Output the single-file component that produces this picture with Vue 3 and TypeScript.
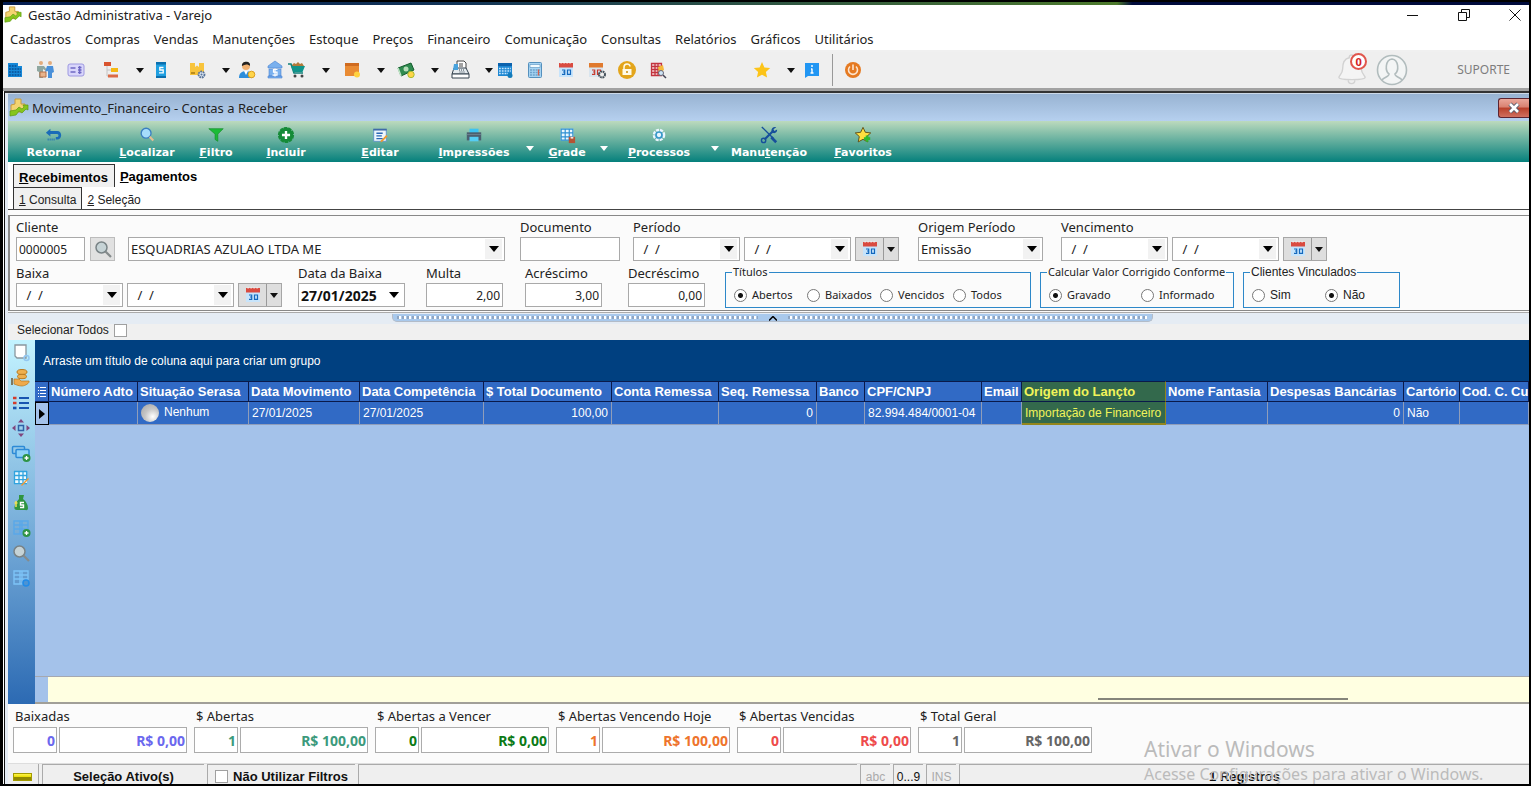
<script setup lang="ts">
import { ref } from 'vue'

interface Tool { icon: string; label: string; split?: boolean }
interface Action { icon: string; before: string; key: string; after: string; split?: boolean }
interface Column { title: string; value: string; width: number; right?: boolean; ball?: boolean; marked?: boolean }
interface Total { label: string; count: string; amount: string; tone: string }

const menus: string[] = ['Cadastros', 'Compras', 'Vendas', 'Manutenções', 'Estoque', 'Preços', 'Financeiro', 'Comunicação', 'Consultas', 'Relatórios', 'Gráficos', 'Utilitários']

const tools: Tool[] = [
  { icon: 'building', label: 'Empresa' },
  { icon: 'people', label: 'Clientes' },
  { icon: 'card', label: 'Cadastro' },
  { icon: 'tree', label: 'Plano', split: true },
  { icon: 'book', label: 'Preços' },
  { icon: 'box', label: 'Produtos', split: true },
  { icon: 'seller', label: 'Vendedor' },
  { icon: 'bank', label: 'Banco' },
  { icon: 'cart', label: 'Vendas', split: true },
  { icon: 'parcel', label: 'Estoque', split: true },
  { icon: 'money', label: 'Financeiro', split: true },
  { icon: 'register', label: 'Caixa', split: true },
  { icon: 'agenda', label: 'Agenda' },
  { icon: 'calc', label: 'Calculadora' },
  { icon: 'cal', label: 'Calendário' },
  { icon: 'calgear', label: 'Configurar calendário' },
  { icon: 'lock', label: 'Bloquear' },
  { icon: 'gridfind', label: 'Consulta' },
  { icon: 'star', label: 'Favoritos', split: true },
  { icon: 'info', label: 'Informações' }
]

const actions: Action[] = [
  { icon: 'back', before: '', key: '', after: 'Retornar' },
  { icon: 'find', before: '', key: 'L', after: 'ocalizar' },
  { icon: 'funnel', before: '', key: 'F', after: 'iltro' },
  { icon: 'plus', before: '', key: 'I', after: 'ncluir' },
  { icon: 'edit', before: '', key: 'E', after: 'ditar' },
  { icon: 'printer', before: '', key: 'I', after: 'mpressões', split: true },
  { icon: 'gridsave', before: '', key: 'G', after: 'rade', split: true },
  { icon: 'gear', before: '', key: 'P', after: 'rocessos', split: true },
  { icon: 'wrench', before: 'Manu', key: 't', after: 'enção' },
  { icon: 'staradd', before: '', key: 'F', after: 'avoritos' }
]

const sideIcons: string[] = ['page', 'hand', 'list', 'move', 'cardsadd', 'gridedit', 'bag', 'tableadd', 'lens', 'tablesync']

const columns: Column[] = [
  { title: 'Número Adto', value: '', width: 89 },
  { title: 'Situação Serasa', value: 'Nenhum', width: 111, ball: true },
  { title: 'Data Movimento', value: '27/01/2025', width: 111 },
  { title: 'Data Competência', value: '27/01/2025', width: 124 },
  { title: '$ Total Documento', value: '100,00', width: 128, right: true },
  { title: 'Conta Remessa', value: '', width: 107 },
  { title: 'Seq. Remessa', value: '0', width: 98, right: true },
  { title: 'Banco', value: '', width: 48 },
  { title: 'CPF/CNPJ', value: '82.994.484/0001-04', width: 117 },
  { title: 'Email', value: '', width: 40 },
  { title: 'Origem do Lançto', value: 'Importação de Financeiro', width: 144, marked: true },
  { title: 'Nome Fantasia', value: '', width: 102 },
  { title: 'Despesas Bancárias', value: '0', width: 136, right: true },
  { title: 'Cartório', value: 'Não', width: 56 },
  { title: 'Cod. C. Cu', value: '', width: 69 }
]

const totals: Total[] = [
  { label: 'Baixadas', count: '0', amount: 'R$ 0,00', tone: 'violet' },
  { label: '$ Abertas', count: '1', amount: 'R$ 100,00', tone: 'teal' },
  { label: '$ Abertas a Vencer', count: '0', amount: 'R$ 0,00', tone: 'green' },
  { label: '$ Abertas Vencendo Hoje', count: '1', amount: 'R$ 100,00', tone: 'orange' },
  { label: '$ Abertas Vencidas', count: '0', amount: 'R$ 0,00', tone: 'red' },
  { label: '$ Total Geral', count: '1', amount: 'R$ 100,00', tone: 'gray' }
]

const titulos = ref('Abertos')
const conforme = ref('Gravado')
const vinculados = ref('Não')
</script>

<template>
  <div class="screen">
    <svg class="defs" aria-hidden="true">
      <symbol id="logo" viewBox="0 0 20 20"><path d="M6 1h6v5h4v5l-4 3H2V7l4-1z" fill="#f3d471" stroke="#c79a3c" /><path d="M1 13l6-1 3-3 3 2 2-2-1-2h5v5l-2-1-4 4-3-2-3 4-6 1z" fill="#86c51d" stroke="#5c9a12" stroke-width=".7" /></symbol>
      <symbol id="building" viewBox="0 0 20 20"><path d="M3 3h10v3h4v11H3z" fill="#1688d8" /><path d="M4 6h8M4 9h12M4 12h12M4 15h12" stroke="#0a4f94" stroke-width="1.300" stroke-dasharray="1.800 1" /></symbol>
      <symbol id="people" viewBox="0 0 20 20"><circle cx="6" cy="3" r="2" fill="#e2ac7c" /><circle cx="15" cy="3" r="2" fill="#e2ac7c" /><path d="M2 6h7l3 4-1 1-3-2v9H4v-6l-2-1z" fill="#8fa7a0" /><path d="M12 6h6l1 6-2 1v5h-4v-7l-3 1z" fill="#4a90d9" /><path d="M5 12h6v5H5z" fill="#e8b48c" stroke="#b8714a" /></symbol>
      <symbol id="card" viewBox="0 0 20 20"><rect x="2" y="4" width="16" height="12" rx="2" fill="#d9d6fb" stroke="#9d98e0" /><path d="M4.500 8h5M4.500 12h5M12 7.500h3.500M12 10h3.500M12 12.500h3.500M13.700 6v8" stroke="#6f68c4" stroke-width="1.300" /></symbol>
      <symbol id="tree" viewBox="0 0 20 20"><path d="M6 6v10h5M6 10h5" stroke="#c4c4c4" fill="none" /><rect x="3" y="2" width="7" height="4" fill="#d9542f" /><rect x="10" y="8" width="7" height="4" fill="#f5b914" /><rect x="7" y="14.500" width="10" height="3" fill="#dc6a45" /></symbol>
      <symbol id="book" viewBox="0 0 20 20"><path d="M5 2h10v16H5z" fill="#1f9fe0" /><path d="M5 2h10v2.500H5zM5 16h10v2H5z" fill="#0b6fae" /><path d="M12.500 7.500h-3.700v2.500h3.400v2.800H8" fill="none" stroke="#fff" stroke-width="1.300" /></symbol>
      <symbol id="box" viewBox="0 0 20 20"><path d="M3 3h5v4l2-1.500L12 7V3h5v12H3z" fill="#f8c43c" /><path d="M4 13h4" stroke="#a87a10" stroke-width="1.500" /><circle cx="14.500" cy="14.500" r="3" fill="#dce6f2" stroke="#5a7599" stroke-width="1.800" stroke-dasharray="1.800 .7" /><circle cx="14.500" cy="14.500" r="1" fill="#5a7599" /></symbol>
      <symbol id="seller" viewBox="0 0 20 20"><circle cx="9" cy="6" r="4" fill="#f0b070" /><path d="M5 6c-1-5 9-6 8 0-2-2-5-2-8 0z" fill="#222" /><path d="M2 18c0-5 3-7 7-7s6 2 6 7z" fill="#2b8ddb" /><path d="M7 11l2 4 2-4z" fill="#fff" /><circle cx="14.500" cy="14.500" r="3.300" fill="#ffd54a" stroke="#dc9e1d" /></symbol>
      <symbol id="bank" viewBox="0 0 20 20"><path d="M3 6l7-5 7 5v2H3zM4 9h12v7H4zM3 16h14v2H3z" fill="#79b0ee" stroke="#4a83d0" stroke-width=".6" /><path d="M12.500 9.500h-4v2.700h3.500v3H7.500M10 8.500v8" fill="none" stroke="#fff" stroke-width="1.200" /></symbol>
      <symbol id="cart" viewBox="0 0 20 20"><path d="M5 5l2-2 2 1 2-2 2 2 2-1 2 3H5z" fill="#b07a3a" /><path d="M1 4h3l3 9h9" fill="none" stroke="#12807a" stroke-width="1.600" /><path d="M4 6h14l-2.500 6h-9z" fill="#10948a" /><circle cx="8" cy="16" r="1.500" fill="#444" /><circle cx="15" cy="16" r="1.500" fill="#444" /></symbol>
      <symbol id="parcel" viewBox="0 0 20 20"><path d="M3 3h14v13H3z" fill="#e98b33" /><path d="M3 3h14v3H3z" fill="#cf6b20" /><circle cx="15" cy="14.500" r="3" fill="#ffd23f" /></symbol>
      <symbol id="money" viewBox="0 0 20 20"><path d="M2 8l13-5 3 7-13 6z" fill="#2f8b50" stroke="#145c2d" /><path d="M2 8l3 8" stroke="#bfe5c6" stroke-width="1.500" /><circle cx="10" cy="9" r="2.500" fill="#b5ddb8" /><circle cx="15" cy="14.500" r="3.200" fill="#ffd54a" stroke="#a7bd30" /></symbol>
      <symbol id="register" viewBox="0 0 20 20"><path d="M7 8V1h7l2 2v6" fill="#fff" stroke="#444" /><path d="M9 4h4M9 6h4" stroke="#444" /><path d="M4 8h12l3 6H2z" fill="#e5ebef" stroke="#34424e" /><path d="M2 14h17v4H2z" fill="#fff" stroke="#34424e" /><path d="M9 10h6M9.500 12h6" stroke="#34424e" stroke-dasharray="1 1" /><path d="M4 4h4v6H3z" fill="#49a3dd" /></symbol>
      <symbol id="agenda" viewBox="0 0 20 20"><path d="M3 3h14v13H3z" fill="#1d87d2" /><path d="M3 3h14v3H3z" fill="#0b62ad" /><path d="M4 8.500h12M4 11h12M4 13.500h9" stroke="#c4e5ff" stroke-width="1.300" stroke-dasharray="1.800 1" /><circle cx="15" cy="15.500" r="2.500" fill="#137bb9" /></symbol>
      <symbol id="calc" viewBox="0 0 20 20"><rect x="3.500" y="2.500" width="13" height="15" rx="1" fill="#a6d4f3" stroke="#5590bd" /><path d="M5 4.500h10v3H5z" fill="#f2fbff" stroke="#5590bd" stroke-width=".6" /><path d="M5 10h10M5 12.500h10M5 15h10" stroke="#6ea3cc" stroke-width="1.300" stroke-dasharray="2 .8" /><path d="M13.500 9.500v6" stroke="#d5604b" stroke-width="1.300" /></symbol>
      <symbol id="cal" viewBox="0 0 20 20"><path d="M3 3h14v14H3z" fill="#c7e4fb" /><path d="M3 3h14v4.500H3z" fill="#d94b40" /><path d="M4.500 3h11" stroke="#fff" stroke-dasharray="1.200 1.800" /><path d="M6 10h2.700v2H7M8.700 12v2.300H6M11.500 10h3v4.300h-3z" fill="none" stroke="#1468bd" stroke-width="1.200" /></symbol>
      <symbol id="calgear" viewBox="0 0 20 20"><path d="M2 3h14v14H2z" fill="#d9e5ee" /><path d="M2 3h14v4.500H2z" fill="#e07a2e" /><path d="M5 10h2.700v2H6M7.700 12v2.300H5M10.500 10h3v4.300h-3z" fill="none" stroke="#c7392d" stroke-width="1.200" /><circle cx="15" cy="14.500" r="3" fill="#eee" stroke="#46525c" stroke-width="2" stroke-dasharray="1.800 .6" /></symbol>
      <symbol id="lock" viewBox="0 0 20 20"><circle cx="10" cy="10" r="9" fill="#e3a51b" /><path d="M5.500 9h9v6h-9z" fill="#fffbe8" /><path d="M7 9V7c0-4 6-4 6-.5" fill="none" stroke="#fffbe8" stroke-width="1.500" /><path d="M10 11v2" stroke="#c68a10" stroke-width="1.500" /></symbol>
      <symbol id="gridfind" viewBox="0 0 20 20"><path d="M3.500 3.500h10v12h-10zM3.500 6.500h10M3.500 9.500h10M3.500 12.500h10M7 3.500v12M10 3.500v12" fill="#f7d8da" stroke="#c2333e" stroke-width="1.300" /><path d="M10 7l5-2 1 5-5 3z" fill="#f5b93a" /><circle cx="13" cy="13" r="2.500" fill="#cfe5f6" stroke="#667" /><path d="M15 15l3 3" stroke="#445" stroke-width="1.500" /></symbol>
      <symbol id="star" viewBox="0 0 20 20"><path d="M10 2l2.400 5.400 5.800.6-4.300 3.900 1.200 5.700L10 14.700l-5.100 2.900 1.200-5.700L1.800 8l5.800-.6z" fill="#fcc419" /></symbol>
      <symbol id="info" viewBox="0 0 20 20"><path d="M3 3h14v13H6l-3 2z" fill="#2196f3" /><path d="M10 5v2M10 8.500V13M8.500 13h3M9 9h1" stroke="#fff" stroke-width="1.400" /></symbol>
      <symbol id="power" viewBox="0 0 20 20"><circle cx="10" cy="10" r="8" fill="#e57a22" /><path d="M7 6.500a4.500 4.500 0 1 0 6 0M10 4.500V10" fill="none" stroke="#fde5cf" stroke-width="1.600" /></symbol>
      <symbol id="bell" viewBox="0 0 32 34"><path d="M13 4c0-4 5-4 5 0 6 1 8 6 8 12 0 5 4 7 4 9 0 3-28 3-28 0 0-2 4-4 4-9 0-6 2-11 7-12z" fill="#f4f4f4" stroke="#d2d2d2" stroke-width="1.500" /><path d="M12 28a3.500 3.500 0 1 0 7 0" fill="none" stroke="#d2d2d2" stroke-width="1.500" /></symbol>
      <symbol id="avatar" viewBox="0 0 32 32"><circle cx="16" cy="16" r="14.500" fill="#f3f5f5" stroke="#b1bcbd" stroke-width="1.600" /><path d="M6 26c2-3 7-3 7-6-4-3-4-14 3-15 7 1 7 12 3 15 0 3 5 3 7 6" fill="none" stroke="#b1bcbd" stroke-width="1.600" /></symbol>

      <symbol id="back" viewBox="0 0 20 20"><path d="M1 7.500L6 3v2.500h7.500c6 0 6 9.500 0 9.500H12v-2.800h1.500c2 0 2-3.400 0-3.400H6v3z" fill="#1a6cb8" /><path d="M3 15h8" stroke="#1a6cb8" stroke-width="2" stroke-dasharray="1 1.200" /></symbol>
      <symbol id="find" viewBox="0 0 20 20"><circle cx="9" cy="8" r="5.500" fill="#a5dcfb" stroke="#3a7fc0" stroke-width="1.500" /><path d="M13 12l4 4" stroke="#e5bd92" stroke-width="2.400" /></symbol>
      <symbol id="funnel" viewBox="0 0 20 20"><path d="M2 3h16l-6 6v8l-3-2V9z" fill="#1bbb36" stroke="#0e8a25" stroke-width=".7" /></symbol>
      <symbol id="plus" viewBox="0 0 20 20"><circle cx="10" cy="10" r="8" fill="#168b38" stroke="#168b38" stroke-width="2" stroke-dasharray="4 1" /><path d="M10 5.500v9M5.500 10h9" stroke="#fff" stroke-width="2.600" /></symbol>
      <symbol id="edit" viewBox="0 0 20 20"><path d="M3 4h14v13H3z" fill="#edf6fd" stroke="#5b93c6" /><path d="M2.500 3h15v2h-15z" fill="#3f6aa8" /><path d="M6 8h7M6 11h6M6 14h7" stroke="#2a67b5" stroke-width="1.600" /><path d="M11 16l6-6 1.500 1.500-6 6-2 .5z" fill="#f09a2e" /></symbol>
      <symbol id="printer" viewBox="0 0 20 20"><path d="M5 3h10v5H5z" fill="#3cc3f2" /><path d="M2 7h16v9H2z" fill="#4c6070" /><path d="M5 12h10v5H5z" fill="#55cdf4" /><path d="M2 9.500h16" stroke="#6c8292" /></symbol>
      <symbol id="gridsave" viewBox="0 0 20 20"><path d="M3 3h14v13H3z" fill="#eaf8ff" /><path d="M3 3.500h14M3 7.700h14M3 12h14M3.500 3v13M8 3v13M12.500 3v13M16.500 3v13M3 15.700h14" stroke="#2d8fd3" stroke-width="1.300" /><path d="M12 12h7v7h-7z" fill="#b45334" /><path d="M14 12h3v2h-3z" fill="#f5e6dc" /></symbol>
      <symbol id="gear" viewBox="0 0 20 20"><circle cx="10" cy="10" r="5" fill="none" stroke="#e9f6ff" stroke-width="4" stroke-dasharray="3 1" /><circle cx="10" cy="10" r="4.300" fill="#3797c8" /><circle cx="10" cy="10" r="2.400" fill="#e9f6ff" /></symbol>
      <symbol id="wrench" viewBox="0 0 20 20"><path d="M2 1l13 13" stroke="#164f9b" stroke-width="1.500" /><path d="M12.500 12.500l5.500 5.500" stroke="#164f9b" stroke-width="3" /><path d="M5 15l9-9" stroke="#164f9b" stroke-width="2.400" /><path d="M18 1.500l-3 2 1 2 3-1.500c.5 3-2.500 5-5 3.500C11 5 14 0 18 1.500z" fill="#164f9b" /><circle cx="4" cy="16" r="2.400" fill="none" stroke="#164f9b" stroke-width="1.500" /></symbol>
      <symbol id="staradd" viewBox="0 0 20 20"><path d="M10 1.500l2.600 5.500 6 .7-4.500 4 1.200 6L10 14.800l-5.300 2.900 1.200-6-4.500-4 6-.7z" fill="#ffdf3f" stroke="#5b4a14" /><path d="M14.500 10.500v7M11 14h7" stroke="#2fb82f" stroke-width="3" /></symbol>

      <symbol id="page" viewBox="0 0 20 20"><path d="M4 2h11v13H6l-2-2z" fill="#fff" stroke="#8a979e" stroke-width="1.300" /><circle cx="15.500" cy="15" r="2.500" fill="none" stroke="#92c7f1" stroke-width="1.500" /></symbol>
      <symbol id="hand" viewBox="0 0 20 20"><ellipse cx="11" cy="4" rx="5" ry="2.500" fill="#efb04f" stroke="#b97a20" /><ellipse cx="11" cy="8.500" rx="4.500" ry="2.200" fill="#efb04f" stroke="#b97a20" /><path d="M1 10v7" stroke="#6b5430" stroke-width="1.500" /><path d="M3 11h5l2 2h8c1 2-4 5-7 5s-5-1-8-2z" fill="#efaa4c" stroke="#b97a20" stroke-width=".7" /></symbol>
      <symbol id="list" viewBox="0 0 20 20"><path d="M8 5h10M8 10h10M8 15h10" stroke="#1854b0" stroke-width="2" /><path d="M2 5h3.500M2 10h3.500" stroke="#d23c2c" stroke-width="2.600" /><path d="M2 15h3.500" stroke="#1854b0" stroke-width="2.600" /></symbol>
      <symbol id="move" viewBox="0 0 20 20"><path d="M7.500 7.500h5v5h-5z" fill="none" stroke="#2f62a8" stroke-width="1.500" /><path d="M10 1l3 3.500H7zM10 19l-3-3.500h6zM1 10l3.500-3v6zM19 10l-3.500 3V7z" fill="#80457d" /></symbol>
      <symbol id="cardsadd" viewBox="0 0 20 20"><rect x="1.500" y="3.500" width="12" height="7" rx="1" fill="none" stroke="#2c8ad6" stroke-width="1.500" /><rect x="5" y="6.500" width="13" height="8" rx="1" fill="#8ed1f7" stroke="#2c8ad6" stroke-width="1.500" /><circle cx="15.500" cy="15" r="4" fill="#2f9446" /><path d="M15.500 13v4M13.500 15h4" stroke="#fff" stroke-width="1.300" /></symbol>
      <symbol id="gridedit" viewBox="0 0 20 20"><path d="M3 3h13v13H3z" fill="#eefaff" /><path d="M3 3.500h13M3 7.500h13M3 11.700h13M3.500 3v13M8 3v13M12 3v13M3 15.700h13M15.700 3v9" stroke="#30a3de" stroke-width="1.300" /><path d="M10 17l7-7 1 1-7 7z" fill="#ef9a35" /></symbol>
      <symbol id="bag" viewBox="0 0 20 20"><path d="M8 2h5l-1 4c3 2 5 6 5 9s-2 2-4 2H6c-3 0-3-2-2-5 1-2 2-4 4-6z" fill="#2f9540" /><path d="M13 9.500h-3.500V12h3v2.500H9" fill="none" stroke="#fff" stroke-width="1.400" /><path d="M5 8v6M3.500 10h3" stroke="#f1e158" stroke-width="1.500" /></symbol>
      <symbol id="tableadd" viewBox="0 0 20 20"><path d="M3 3h14v13H3zM3 7h14M3 11h14M9 3v13M11 3v13" fill="none" stroke="#59a8e9" stroke-width="1.400" /><circle cx="15.500" cy="15" r="4" fill="#2f9446" /><path d="M15.500 13v4M13.500 15h4" stroke="#fff" stroke-width="1.300" /></symbol>
      <symbol id="lens" viewBox="0 0 20 20"><circle cx="8.500" cy="8.500" r="5.500" fill="#c6d3d6" stroke="#798386" stroke-width="1.500" /><path d="M12.500 12.500L18 18" stroke="#858b8c" stroke-width="2.200" /></symbol>
      <symbol id="tablesync" viewBox="0 0 20 20"><path d="M3 3h14v13H3zM3 7h14M3 11h14M9 3v13M11 3v13" fill="none" stroke="#7dc3f7" stroke-width="1.400" /><circle cx="15" cy="15" r="3" fill="#4d93d2" stroke="#238be6" stroke-width="1.600" /></symbol>
      <symbol id="tri" viewBox="0 0 10 6"><path d="M0 0h10L5 6z" /></symbol>
    </svg>

    <div class="wallpaper"></div>
    <header class="titlebar">
      <svg class="logo"><use href="#logo" /></svg>
      <h1>Gestão Administrativa - Varejo</h1>
      <div class="winbtns">
        <button type="button" aria-label="Minimizar"><svg viewBox="0 0 12 12"><path d="M0 6.500h11" /></svg></button>
        <button type="button" aria-label="Restaurar"><svg viewBox="0 0 12 12"><path d="M.5 3.500h8v8h-8zM3.500 3V.5h8v8H9" /></svg></button>
        <button type="button" aria-label="Fechar"><svg viewBox="0 0 12 12"><path d="M.5.5l11 11M11.500.5l-11 11" /></svg></button>
      </div>
    </header>
    <nav class="menubar">
      <a v-for="m in menus" :key="m" href="#">{{ m }}</a>
    </nav>

    <div class="toolbar">
      <div class="tools">
        <div v-for="t in tools" :key="t.label" class="tool" :class="{ split: t.split }">
          <button type="button" :aria-label="t.label"><svg class="i20"><use :href="'#' + t.icon" /></svg></button>
          <button v-if="t.split" type="button" class="drop" :aria-label="'Mais ' + t.label"><svg class="tri"><use href="#tri" /></svg></button>
        </div>
        <span class="divider"></span>
        <button type="button" class="power" aria-label="Sair"><svg class="i20"><use href="#power" /></svg></button>
      </div>
      <button type="button" class="bell" aria-label="Notificações"><svg><use href="#bell" /></svg><span class="badge">0</span></button>
      <svg class="avatar"><use href="#avatar" /></svg>
      <span class="user">SUPORTE</span>
    </div>

    <main class="child">
      <div class="childtitle">
        <svg class="logo"><use href="#logo" /></svg>
        <h2>Movimento_Financeiro - Contas a Receber</h2>
        <button type="button" class="close" aria-label="Fechar janela"><svg viewBox="0 0 14 12"><path d="M3 2l8 8M11 2l-8 8" stroke="#555b6b" stroke-width="4.500" /><path d="M3 2l8 8M11 2l-8 8" stroke="#fff" stroke-width="2.600" /></svg></button>
      </div>

      <div class="actions">
        <template v-for="a in actions" :key="a.icon">
          <button type="button" class="action"><svg class="i18"><use :href="'#' + a.icon" /></svg><span>{{ a.before }}<u>{{ a.key }}</u>{{ a.after }}</span></button>
          <button v-if="a.split" type="button" class="adrop" :aria-label="'Opções ' + a.key + a.after"><svg class="tri"><use href="#tri" /></svg></button>
        </template>
      </div>

      <div class="tabs main-tabs">
        <button type="button" class="on"><u>R</u>ecebimentos</button>
        <button type="button"><u>P</u>agamentos</button>
      </div>
      <div class="tabs sub-tabs">
        <button type="button" class="on"><u>1</u>&nbsp;Consulta</button>
        <button type="button"><u>2</u>&nbsp;Seleção</button>
      </div>

      <section class="filters">
        <div class="frow first">
          <div class="field">
            <label for="cliente">Cliente</label>
            <div class="line">
              <input id="cliente" class="code" type="text" value="0000005" />
              <button type="button" class="lensbtn" aria-label="Buscar cliente"><svg class="i20"><use href="#lens" /></svg></button>
              <div class="combo wide"><select aria-label="Nome do cliente"><option>ESQUADRIAS AZULAO LTDA ME</option></select><span class="arrow"><svg class="tri"><use href="#tri" /></svg></span></div>
            </div>
          </div>
          <div class="field">
            <label for="documento">Documento</label>
            <input id="documento" class="doc" type="text" />
          </div>
          <div class="field">
            <label for="periodo">Período</label>
            <div class="line dates">
              <div class="combo"><input id="periodo" type="text" value=" /  /" /><button type="button" class="arrow" aria-label="Abrir início"><svg class="tri"><use href="#tri" /></svg></button></div>
              <div class="combo"><input type="text" value=" /  /" aria-label="Período fim" /><button type="button" class="arrow" aria-label="Abrir fim"><svg class="tri"><use href="#tri" /></svg></button></div>
              <div class="calbtn"><button type="button" aria-label="Calendário do período"><svg class="i20"><use href="#cal" /></svg></button><button type="button" aria-label="Atalhos do período"><svg class="tri"><use href="#tri" /></svg></button></div>
            </div>
          </div>
          <div class="field">
            <label for="origem">Origem Período</label>
            <div class="combo origin"><select id="origem"><option>Emissão</option></select><span class="arrow"><svg class="tri"><use href="#tri" /></svg></span></div>
          </div>
          <div class="field">
            <label for="vencimento">Vencimento</label>
            <div class="line dates">
              <div class="combo"><input id="vencimento" type="text" value=" /  /" /><button type="button" class="arrow" aria-label="Abrir início"><svg class="tri"><use href="#tri" /></svg></button></div>
              <div class="combo"><input type="text" value=" /  /" aria-label="Vencimento fim" /><button type="button" class="arrow" aria-label="Abrir fim"><svg class="tri"><use href="#tri" /></svg></button></div>
              <div class="calbtn"><button type="button" aria-label="Calendário do vencimento"><svg class="i20"><use href="#cal" /></svg></button><button type="button" aria-label="Atalhos do vencimento"><svg class="tri"><use href="#tri" /></svg></button></div>
            </div>
          </div>
        </div>

        <div class="frow second">
          <div class="field">
            <label for="baixa">Baixa</label>
            <div class="line dates">
              <div class="combo"><input id="baixa" type="text" value=" /  /" /><button type="button" class="arrow" aria-label="Abrir início"><svg class="tri"><use href="#tri" /></svg></button></div>
              <div class="combo"><input type="text" value=" /  /" aria-label="Baixa fim" /><button type="button" class="arrow" aria-label="Abrir fim"><svg class="tri"><use href="#tri" /></svg></button></div>
              <div class="calbtn"><button type="button" aria-label="Calendário da baixa"><svg class="i20"><use href="#cal" /></svg></button><button type="button" aria-label="Atalhos da baixa"><svg class="tri"><use href="#tri" /></svg></button></div>
            </div>
          </div>
          <div class="field">
            <label for="databaixa">Data da Baixa</label>
            <div class="combo strong"><input id="databaixa" type="text" value="27/01/2025" /><button type="button" class="arrow" aria-label="Abrir data"><svg class="tri"><use href="#tri" /></svg></button></div>
          </div>
          <div class="field"><label for="multa">Multa</label><input id="multa" class="num" type="text" value="2,00" /></div>
          <div class="field"><label for="acrescimo">Acréscimo</label><input id="acrescimo" class="num" type="text" value="3,00" /></div>
          <div class="field"><label for="decrescimo">Decréscimo</label><input id="decrescimo" class="num" type="text" value="0,00" /></div>
          <fieldset class="f-tit">
            <legend>Títulos</legend>
            <label v-for="o in ['Abertos', 'Baixados', 'Vencidos', 'Todos']" :key="o"><input v-model="titulos" type="radio" name="titulos" :value="o" />{{ o }}</label>
          </fieldset>
          <fieldset class="f-calc">
            <legend>Calcular Valor Corrigido Conforme</legend>
            <label v-for="o in ['Gravado', 'Informado']" :key="o"><input v-model="conforme" type="radio" name="conforme" :value="o" />{{ o }}</label>
          </fieldset>
          <fieldset class="f-vinc">
            <legend>Clientes Vinculados</legend>
            <label v-for="o in ['Sim', 'Não']" :key="o"><input v-model="vinculados" type="radio" name="vinculados" :value="o" />{{ o }}</label>
          </fieldset>
        </div>
      </section>

      <div class="splitter">
        <div class="grip"><span class="dots"></span><button type="button" aria-label="Recolher filtros"><svg viewBox="0 0 8 5"><path d="M0 4.500L4 .5l4 4" /></svg></button><span class="dots"></span></div>
      </div>
      <label class="selectall">Selecionar Todos <input type="checkbox" /></label>

      <div class="workspace">
        <aside class="side">
          <button v-for="s in sideIcons" :key="s" type="button" :aria-label="s"><svg class="i20"><use :href="'#' + s" /></svg></button>
        </aside>
        <section class="grid">
          <div class="grouping">Arraste um título de coluna aqui para criar um grupo</div>
          <div class="tablewrap">
            <table>
              <colgroup><col class="indcol" /><col v-for="c in columns" :key="c.title" :style="{ width: c.width + 'px' }" /></colgroup>
              <thead>
                <tr>
                  <th class="ind"><svg viewBox="0 0 8 12"><path d="M0 1.500h8M0 4.500h8M0 7.500h8M0 10.500h8" stroke="#fff" stroke-dasharray="1 1 6" /></svg></th>
                  <th v-for="c in columns" :key="c.title" :class="{ marked: c.marked }">{{ c.title }}</th>
                </tr>
              </thead>
              <tbody>
                <tr>
                  <td class="ind cur"><svg viewBox="0 0 6 10"><path d="M0 0l6 5-6 5z" /></svg></td>
                  <td v-for="c in columns" :key="c.title" :class="{ right: c.right, marked: c.marked }"><span v-if="c.ball" class="ball"></span>{{ c.value }}</td>
                </tr>
              </tbody>
            </table>
          </div>
          <div class="footer"><span class="thumb"></span></div>
        </section>
      </div>

      <section class="totals">
        <div v-for="(t, i) in totals" :key="t.label" class="total" :class="t.tone">
          <label :for="'total' + i">{{ t.label }}</label>
          <div class="pair">
            <input class="count" type="text" readonly :value="t.count" :aria-label="t.label + ' quantidade'" />
            <input :id="'total' + i" class="amount" type="text" readonly :value="t.amount" />
          </div>
        </div>
      </section>

      <footer class="status">
        <span class="led"><i></i></span>
        <span class="cell s1">Seleção Ativo(s)</span>
        <label class="cell s2"><input type="checkbox" />Não Utilizar Filtros</label>
        <span class="cell s3"></span>
        <span class="cell key off">abc</span>
        <span class="cell key">0...9</span>
        <span class="cell key off">INS</span>
        <span class="cell s4">1 Registros</span>
      </footer>
    </main>

    <div class="watermark"><strong>Ativar o Windows</strong><span>Acesse Configurações para ativar o Windows.</span></div>
  </div>
</template>

<style>
body { margin: 0; background: #000; }
</style>

<style scoped>
* { box-sizing: border-box; }
.screen {
  position: relative; display: flex; flex-direction: column; min-height: 100vh; overflow: hidden;
  border: 2px solid #000; border-left-width: 3px; background: #fff; color: #222;
  font-family: "Noto Sans", "Open Sans", sans-serif; font-size: 12px; line-height: 16px;
}
.defs { position: absolute; width: 0; height: 0; }
button { display: inline-flex; align-items: center; justify-content: center; padding: 0; border: 0; background: none; font: inherit; color: inherit; }
input, select { font: inherit; color: inherit; margin: 0; border-radius: 0; }
h1, h2 { margin: 0; font-size: 13px; font-weight: 400; }
.i20 { display: block; width: 20px; height: 20px; }
.i18 { display: block; width: 18px; height: 18px; }
.tri { display: block; width: 8px; height: 5px; fill: #111; }
.logo { width: 18px; height: 18px; flex: none; }

.wallpaper { height: 3px; background: linear-gradient(90deg, #041c50 0, #123457 30%, #4d7a2c 73%, #000b3c 74%); }
.titlebar { display: flex; align-items: center; gap: 6px; height: 20px; padding-left: 1px; }
.winbtns { display: flex; margin-left: auto; gap: 39px; padding-right: 8px; }
.winbtns svg { width: 12px; height: 12px; fill: none; stroke: #111; }
.menubar { display: flex; align-items: center; gap: 14px; height: 27px; padding: 3px 0 0 7px; border-bottom: 2px solid #f0f0f0; font-size: 13px; }
.menubar a { color: #222; text-decoration: none; }

.toolbar { display: flex; align-items: center; height: 39px; padding: 0 19px 0 2px; background: #efefef; border-bottom: 3px solid #a2a2a2; }
.tools {
  display: grid; flex: 1; align-items: center;
  grid-template-columns: 30px 31px 35px 50px 36px 50px 28px 22px 55px 54px 54px 45px 30px 31px 31px 30px 31px 104px 50px 30px 11px 1fr;
}
.tool { display: flex; align-items: center; width: 20px; }
.tool.split { width: 44px; justify-content: space-between; }
.tool .drop { width: 10px; height: 20px; }
.divider { width: 1px; height: 32px; background: #999; }
.power { justify-self: start; }
.bell { position: relative; margin-right: 9px; }
.bell svg { width: 30px; height: 32px; }
.badge { position: absolute; top: -1px; right: 0; width: 17px; height: 17px; border: 2px solid #e0564d; border-radius: 50%; background: #fff; color: #d3201d; font-size: 11px; font-weight: 700; line-height: 13px; text-align: center; }
.avatar { width: 32px; height: 32px; margin-right: 49px; }
.user { color: #7d7d7d; }

.child { display: flex; flex: 1; flex-direction: column; margin-left: 1px; padding-left: 3px; border-top: 2px solid #333; border-left: 1px solid #111; background: linear-gradient(90deg, #e4ebf4 3px, #fbfbfb 3px); min-width: 0; }
.childtitle { display: flex; align-items: center; gap: 6px; height: 28px; padding: 1px 0 0 1px; background: linear-gradient(#98b3d2, #b6d0ef); border-top: 1px solid #ccd9e8; }
.childtitle .logo { width: 20px; height: 20px; margin-right: -3px; }
.close { width: 31px; height: 20px; margin-left: auto; border: 1px solid #5d2430; border-right: 0; border-radius: 3px 0 0 3px; background: linear-gradient(#eaa79a 0, #d98170 45%, #b9402a 50%, #d07060 100%); }
.close svg { width: 14px; height: 12px; }

.actions {
  display: grid; height: 41px; overflow: hidden; color: #fff;
  grid-template-columns: 92px 94px 44px 96px 92px 96px 16px 58px 16px 94px 18px 90px 98px 1fr;
  background: linear-gradient(#bcdabd, #05807c);
  font-family: "DejaVu Sans", sans-serif; font-size: 11px; font-weight: 700;
}
.action { flex-direction: column; gap: 1px; line-height: 15px; padding-top: 3px; white-space: nowrap; }
.adrop { padding-top: 14px; }
.adrop .tri { fill: #fff; }

.tabs { display: flex; padding-left: 5px; font-family: "Liberation Sans", sans-serif; }
.tabs button { padding: 3px 5px 0; }
.tabs .on { border: 1px solid #333; border-bottom: 0; background: #f0f0f0; }
.main-tabs { height: 25px; padding-top: 2px; background: #fff; font-size: 13px; font-weight: 700; color: #000; }
.main-tabs .on { padding-right: 6px; }
.sub-tabs { height: 23px; background: #fff; border-bottom: 1px solid #444; font-size: 12px; }

.filters { margin-top: 5px; padding: 3px 0 2px 6px; border: 1px solid #888; border-right: 0; border-left: 2px solid #888; background: #fbfbfb; }
.frow { display: grid; }
.first { grid-template-columns: 504px 113px 285px 143px 1fr; }
.second { grid-template-columns: 282px 128px 99px 103px 97px 315px 203px 1fr; margin-top: 4px; }
.field { display: flex; flex-direction: column; align-items: flex-start; gap: 2px; }
.field > label { font-size: 13px; white-space: nowrap; }
.line { display: flex; }
.dates { gap: 4px; }
.filters input[type="text"], .combo { height: 24px; border: 1px solid #a9a9a9; background: #fff; padding: 0 2px; outline: 0; }
.filters .code { width: 69px; }
.filters .doc { width: 100px; }
.filters .num { width: 77px; text-align: right; padding-right: 1px; }
.lensbtn { width: 25px; height: 24px; margin: 0 13px 0 5px; border: 1px solid #bcbcbc; background: #e1e1e1; }
.combo { display: flex; align-items: center; width: 107px; font-size: 13px; }
.combo.wide { width: 377px; }
.combo.origin { width: 125px; }
.filters .combo input { flex: 1; width: 0; height: 20px; border: 0; padding: 0 4px; white-space: pre; }
.combo select { flex: 1; min-width: 0; appearance: none; border: 0; background: none; outline: 0; padding: 0; }
.combo .arrow { display: flex; align-items: center; justify-content: center; width: 17px; height: 20px; background: #f2f2f2; }
.combo .tri { width: 10px; height: 6px; fill: #000; }
.combo.strong { font-size: 14px; font-weight: 700; color: #111; }
.filters .combo.strong input { padding: 0; }
.combo.strong .arrow { background: none; }
.calbtn { display: flex; width: 44px; height: 24px; border: 1px solid #a6a6a6; background: #dedede; }
.calbtn button:first-child { flex: 1; border-right: 1px solid #999; }
.calbtn button:last-child { width: 14px; }
fieldset { display: flex; align-items: center; height: 43px; margin: 0; padding: 4px 0 0 8px; border: 1px solid #2d88c9; min-width: 0; white-space: nowrap; font-size: 11px; }
legend { padding: 0 1px; margin-left: -2px; line-height: 14px; }
fieldset label { display: flex; align-items: center; gap: 5px; }
.f-tit { width: 306px; }
.f-tit label { width: 73px; }
.f-calc { width: 194px; }
.f-calc label { width: 93px; }
.f-vinc { width: 157px; font-family: "Liberation Sans", sans-serif; font-size: 12px; }
.f-vinc label { width: 73px; }
input[type="radio"] { appearance: none; width: 13px; height: 13px; border: 1px solid #777; border-radius: 50%; background: #fff; flex: none; }
input[type="radio"]:checked { background: radial-gradient(circle, #111 0 2px, #fff 3px); }
input[type="checkbox"] { appearance: none; width: 13px; height: 13px; border: 1px solid #a0a0a0; background: #fff; flex: none; }

.splitter { display: flex; justify-content: center; height: 12px; margin-top: 1px; border-top: 1px solid #aaa; background: #e5ecf4; }
.grip { display: flex; width: 50%; height: 8px; margin: 1px 0 0 8px; border-radius: 0 0 5px 5px; background: #a9c9ec; border: 1px solid #b3bcc8; border-top: 0; }
.dots { flex: 1; margin: 2px 4px; background: repeating-linear-gradient(90deg, #8fa6c3 0 2px, #fff 2px 4px, #a9c9ec 4px 5px); height: 3px; }
.grip button { width: 22px; height: 8px; }
.grip svg { width: 8px; height: 5px; fill: none; stroke: #000; stroke-width: 1.5px; }
.selectall { display: flex; align-items: center; gap: 5px; height: 16px; padding: 0 0 4px 9px; background: #f0f0f0; font-family: "Liberation Sans", sans-serif; }

.workspace { display: flex; flex: 1; min-width: 0; }
.side { display: flex; flex: none; flex-direction: column; width: 27px; padding-right: 1px; background: linear-gradient(#c3f3ff, #6ba2d3 60%, #2c6ab3); }
.side button { height: 25px; }
.grid { display: flex; flex: 1; flex-direction: column; min-width: 0; background: #a4c2ea; font-family: "Liberation Sans", sans-serif; }
.grouping { display: flex; align-items: center; height: 41px; padding-left: 8px; background: #004080; color: #fff; }
.tablewrap { flex: 1; overflow: hidden; }
table { width: 100%; min-width: max-content; table-layout: fixed; border-collapse: separate; border-spacing: 0; color: #fff; }
.indcol { width: 14px; }
th { height: 21px; padding: 0 2px; border: solid #0a1a4a; border-width: 1px 1px 1px 0; background: #316ac5; font-size: 13px; line-height: 16px; text-align: left; white-space: nowrap; overflow: hidden; }
td { height: 23px; padding: 0 3px; border: solid #8f9dba; border-width: 0 1px 1px 0; background: #316ac5; white-space: nowrap; overflow: hidden; }
.right { text-align: right; }
.ind { padding: 0 2px; text-align: center; }
.ind svg { display: block; width: 8px; height: 12px; margin: auto; }
.cur { background: #a4c2ea; border: 1px solid #000; }
.cur svg { width: 6px; height: 10px; fill: #000; }
.marked { background: #33694c; color: #f1f45a; border-right-color: #93861c; }
td.marked { border-bottom: 2px solid #93861c; }
.ball { display: inline-block; width: 18px; height: 18px; margin-right: 5px; border-radius: 50%; vertical-align: middle; background: radial-gradient(circle at 65% 70%, #fff, #c6c6c6 45%, #a2a2a2); }
.footer { display: flex; align-items: flex-end; justify-content: flex-end; height: 28px; padding-right: 181px; border-top: 1px solid #a5a8b0; border-bottom: 2px solid #a19f98; background: linear-gradient(90deg, #a4c2ea 13px, #ffffe1 13px); }
.thumb { width: 250px; height: 2px; margin-bottom: 2px; background: #85857a; }

.totals { display: grid; grid-template-columns: repeat(6, 181px); height: 59px; padding: 4px 0 0 5px; }
.total label { display: block; padding-left: 2px; font-size: 13px; white-space: nowrap; }
.pair { display: flex; gap: 2px; margin-top: 3px; }
.pair input { height: 26px; padding: 0 1px; border: 1px solid #acacac; background: #fff; text-align: right; font-size: 14px; font-weight: 700; outline: 0; }
.pair .count { width: 44px; }
.pair .amount { width: 128px; }
.violet input { color: #6b68ee; }
.teal input { color: #3c9a7c; }
.green input { color: #0c7a16; }
.orange input { color: #ee742c; }
.red input { color: #ee4b4b; }
.gray input { color: #666; }

.status { display: flex; gap: 3px; height: 21px; background: #efefef; border-top: 1px solid #ddd; font-family: "Liberation Sans", sans-serif; font-size: 13px; font-weight: 700; color: #111; }
.cell { display: flex; align-items: center; justify-content: center; border: solid #aaa; border-width: 1px 0 0 1px; padding-top: 4px; white-space: nowrap; }
.led { display: flex; width: 31px; padding: 9px 6px 0 5px; border-right: 1px solid #aaa; }
.led i { flex: 1; height: 8px; background: linear-gradient(#fff44a, #e8dc00 50%, #918900 50%); border: 1px solid #a39b00; }
.s1 { width: 162px; }
.s2 { width: 148px; gap: 5px; }
.s3 { width: 499px; }
.key { width: 30px; font-size: 12px; font-weight: 400; }
.off { color: #aaa; }
.s4 { flex: 1; }

.watermark { position: absolute; right: 45px; bottom: 0; display: flex; flex-direction: column; width: 340px; color: #bbb; font-size: 16px; white-space: nowrap; pointer-events: none; }
.watermark strong { font-size: 21px; line-height: 30px; font-weight: 400; }
.watermark span { line-height: 20px; }
</style>
